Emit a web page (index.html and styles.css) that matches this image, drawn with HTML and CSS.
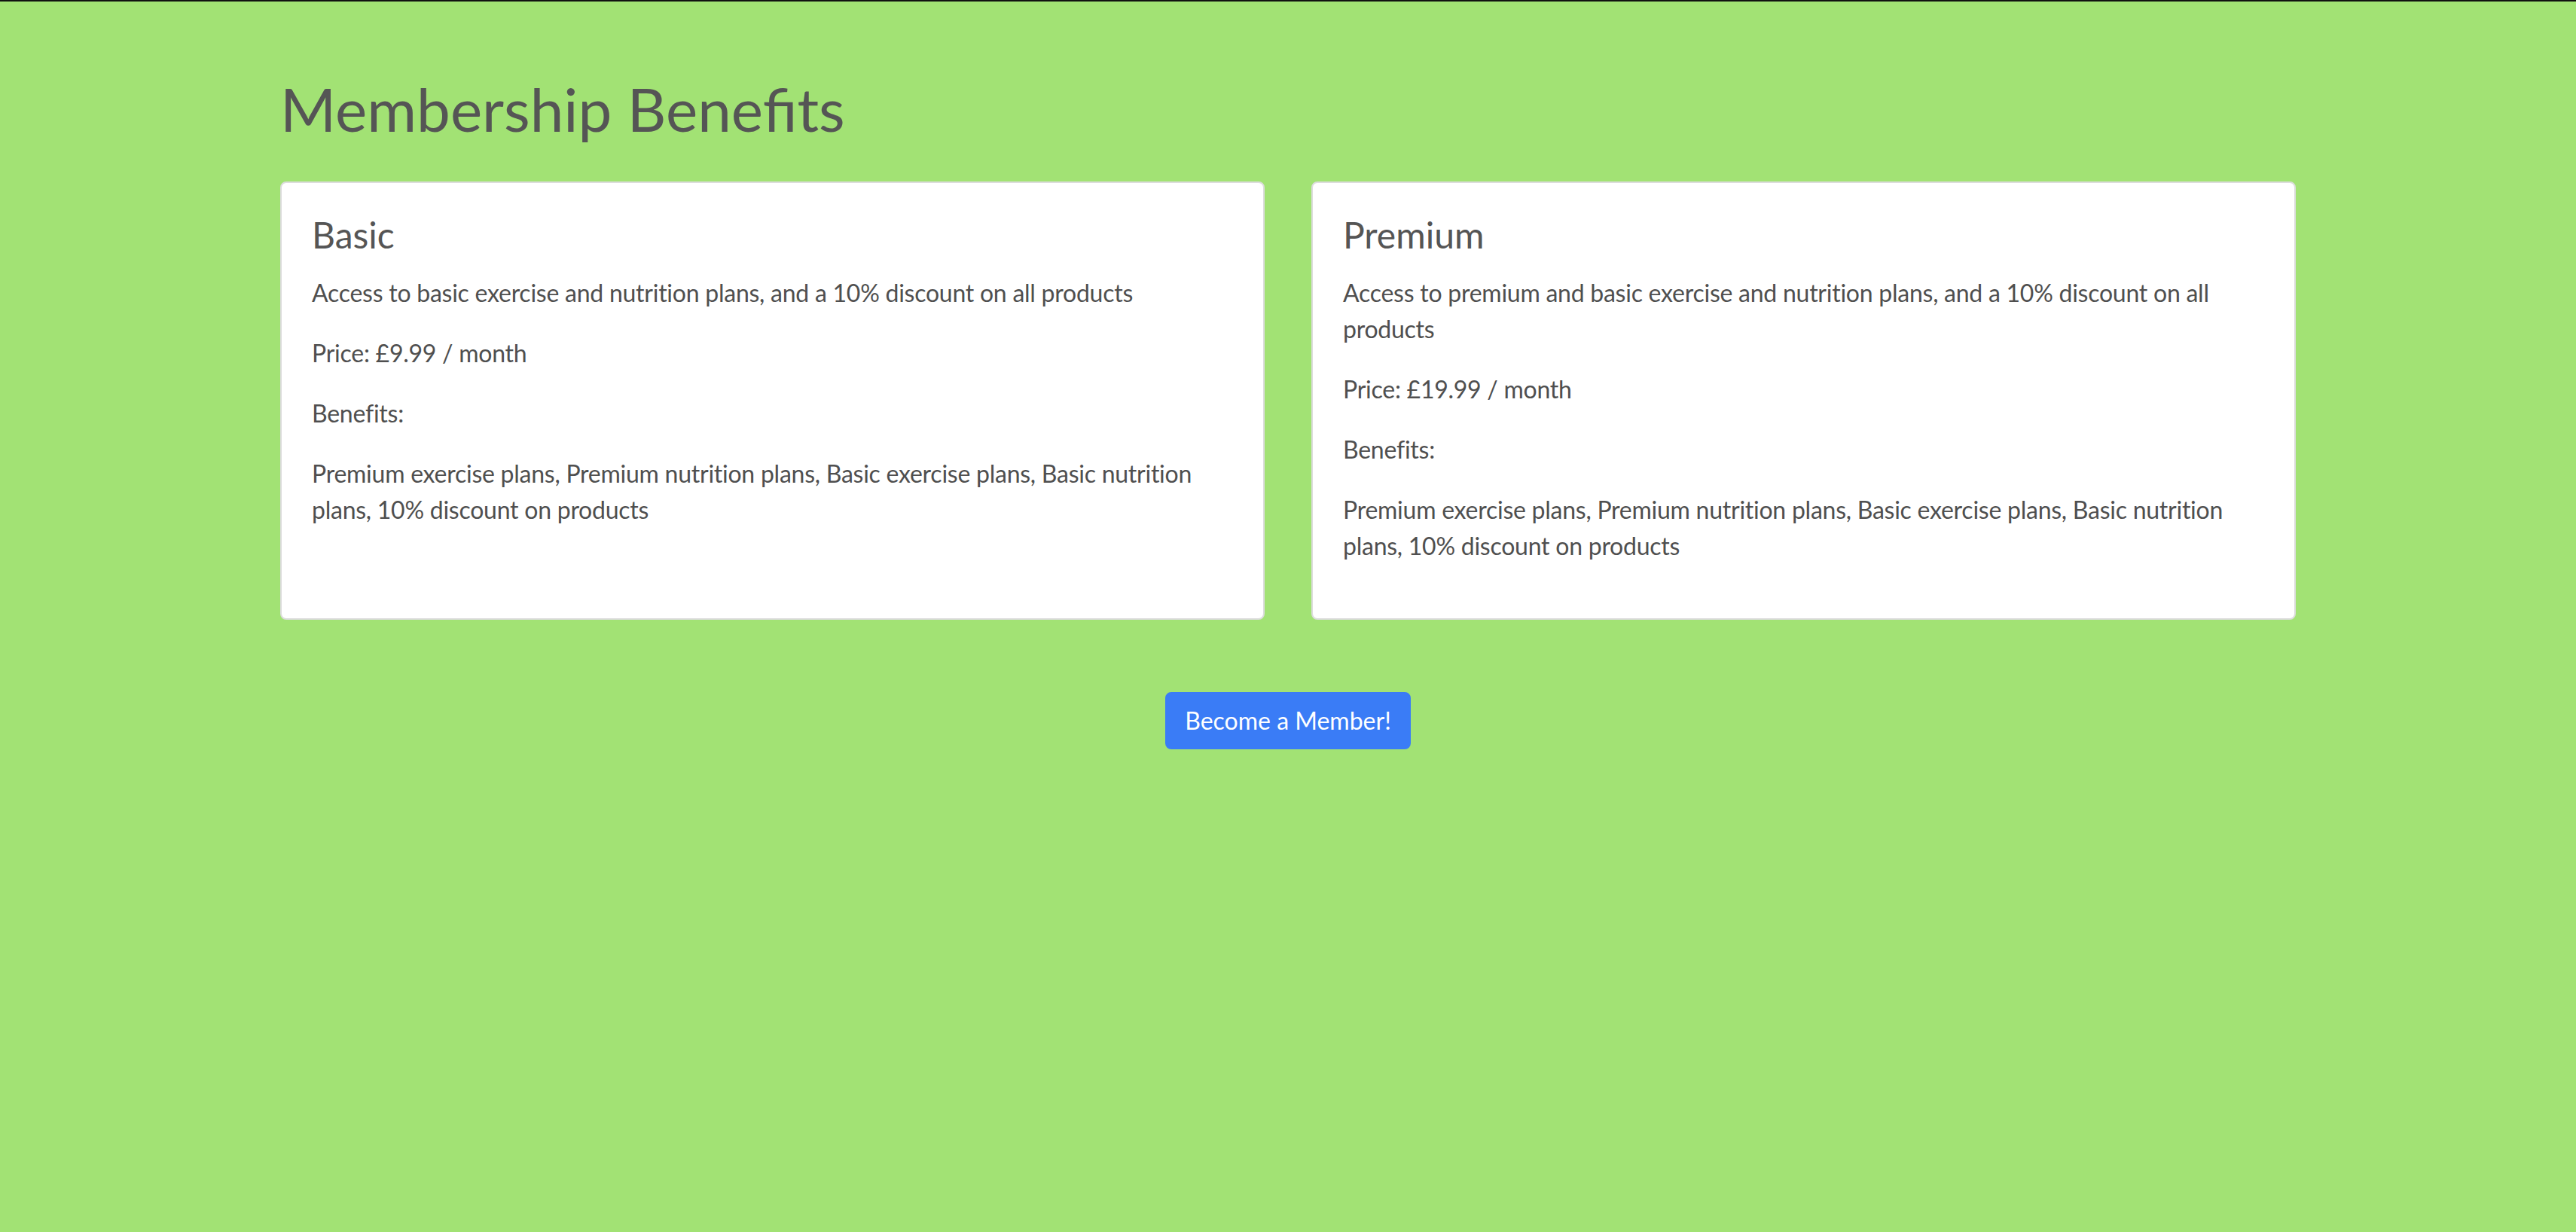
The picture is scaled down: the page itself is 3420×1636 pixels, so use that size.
FILE: index.html
```html
<!DOCTYPE html>
<html lang="en">
<head>
<meta charset="utf-8">
<title>Membership Benefits</title>
<link rel="stylesheet" href="styles.css">
</head>
<body>
<div class="topbar"></div>
<main class="container">
  <h1 class="page-title">Membership Benefits</h1>
  <div class="plans">
    <section class="card">
      <h4 class="card-title">Basic</h4>
      <p>Access to basic exercise and nutrition plans, and a 10% discount on all products</p>
      <p>Price: £9.99 / month</p>
      <p>Benefits:</p>
      <p>Premium exercise plans, Premium nutrition plans, Basic exercise plans, Basic nutrition plans, 10% discount on products</p>
    </section>
    <section class="card">
      <h4 class="card-title">Premium</h4>
      <p>Access to premium and basic exercise and nutrition plans, and a 10% discount on all products</p>
      <p>Price: £19.99 / month</p>
      <p>Benefits:</p>
      <p>Premium exercise plans, Premium nutrition plans, Basic exercise plans, Basic nutrition plans, 10% discount on products</p>
    </section>
  </div>
  <div class="actions">
    <button class="btn-primary" type="button">Become a Member!</button>
  </div>
</main>
</body>
</html>
```

FILE: styles.css
```css
* { box-sizing: border-box; }

html, body {
  margin: 0;
  padding: 0;
}

body {
  background: #a2e274;
  font-family: Lato, "Open Sans", "Liberation Sans", sans-serif;
  font-size: 32px;
  line-height: 1.5;
  color: #555;
  min-height: 1636px;
}

.topbar {
  height: 2px;
  background: #111;
}

.container {
  width: 80%;
  margin: 0 auto;
  padding: 0 30px;
}

.page-title {
  margin: 94px 0 49px;
  font-size: 80px;
  font-weight: 400;
  line-height: 1.2;
  color: #555;
}

.plans {
  display: flex;
  gap: 62px;
  align-items: stretch;
}

.card {
  flex: 1 1 0;
  background: #fff;
  border: 2px solid #dcdcdc;
  border-radius: 8px;
  padding: 40px;
}

.card-title {
  margin: 0 0 24px;
  font-size: 48px;
  font-weight: 400;
  line-height: 1.2;
  color: #555;
}

.card p {
  margin: 0 0 32px;
  color: #4f4f4f;
  letter-spacing: -0.25px;
}

.actions {
  display: flex;
  justify-content: center;
  margin-top: 96px;
}

.btn-primary {
  font-family: inherit;
  font-size: 32px;
  line-height: 48px;
  padding: 12px 24px;
  color: #fff;
  background: #3a7cf6;
  border: 2px solid #3a7cf6;
  border-radius: 8px;
  cursor: pointer;
}
```
